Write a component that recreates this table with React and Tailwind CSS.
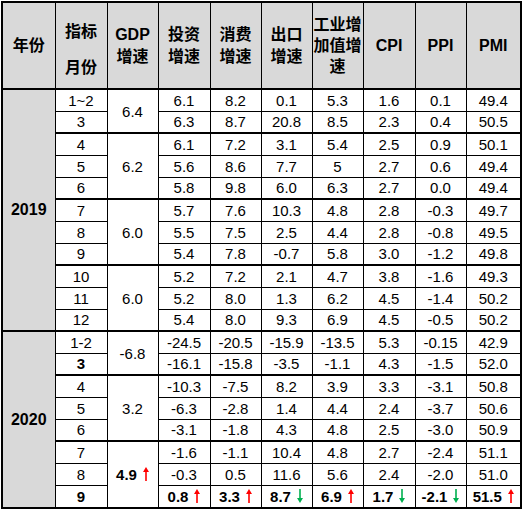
import React from 'react';

// one arrow glyph, drawn so the stroke stays thin like the reference
const Arrow = ({ dir }) => (
  <svg width="6" height="14" viewBox="0 0 6 14" className="inline-block ml-[6px] align-[-1px]">
    {dir === 'up' ? (
      <g fill="#ff0000">
        <rect x="2.2" y="4" width="1.6" height="10" />
        <polygon points="3,0 6,5 0,5" />
      </g>
    ) : (
      <g fill="#00b050">
        <rect x="2.2" y="0" width="1.6" height="10" />
        <polygon points="3,14 6,9 0,9" />
      </g>
    )}
  </svg>
);

const groups = [
  {
    year: '2019',
    quarters: [
      { gdp: '6.4', rows: [
        ['1~2', '6.1', '8.2', '0.1', '5.3', '1.6', '0.1', '49.4'],
        ['3', '6.3', '8.7', '20.8', '8.5', '2.3', '0.4', '50.5'],
      ] },
      { gdp: '6.2', rows: [
        ['4', '6.1', '7.2', '3.1', '5.4', '2.5', '0.9', '50.1'],
        ['5', '5.6', '8.6', '7.7', '5', '2.7', '0.6', '49.4'],
        ['6', '5.8', '9.8', '6.0', '6.3', '2.7', '0.0', '49.4'],
      ] },
      { gdp: '6.0', rows: [
        ['7', '5.7', '7.6', '10.3', '4.8', '2.8', '-0.3', '49.7'],
        ['8', '5.5', '7.5', '2.5', '4.4', '2.8', '-0.8', '49.5'],
        ['9', '5.4', '7.8', '-0.7', '5.8', '3.0', '-1.2', '49.8'],
      ] },
      { gdp: '6.0', rows: [
        ['10', '5.2', '7.2', '2.1', '4.7', '3.8', '-1.6', '49.3'],
        ['11', '5.2', '8.0', '1.3', '6.2', '4.5', '-1.4', '50.2'],
        ['12', '5.4', '8.0', '9.3', '6.9', '4.5', '-0.5', '50.2'],
      ] },
    ],
  },
  {
    year: '2020',
    quarters: [
      { gdp: '-6.8', rows: [
        ['1-2', '-24.5', '-20.5', '-15.9', '-13.5', '5.3', '-0.15', '42.9'],
        ['3', '-16.1', '-15.8', '-3.5', '-1.1', '4.3', '-1.5', '52.0'],
      ], boldMonth: { 1: true } },
      { gdp: '3.2', rows: [
        ['4', '-10.3', '-7.5', '8.2', '3.9', '3.3', '-3.1', '50.8'],
        ['5', '-6.3', '-2.8', '1.4', '4.4', '2.4', '-3.7', '50.6'],
        ['6', '-3.1', '-1.8', '4.3', '4.8', '2.5', '-3.0', '50.9'],
      ] },
      { gdp: '4.9', gdpArrow: 'up', rows: [
        ['7', '-1.6', '-1.1', '10.4', '4.8', '2.7', '-2.4', '51.1'],
        ['8', '-0.3', '0.5', '11.6', '5.6', '2.4', '-2.0', '51.0'],
        ['9', '0.8', '3.3', '8.7', '6.9', '1.7', '-2.1', '51.5'],
      ], lastBold: ['up', 'up', 'down', 'up', 'down', 'down', 'up'] },
    ],
  },
];

const cell = 'border border-black p-0 text-center align-middle';

export default function App() {
  return (
    <div className="bg-white w-[524px] h-[511px] pl-[1px] pt-[1px] font-['Liberation_Sans','Noto_Sans_CJK_SC',sans-serif] text-black">
      <div className="w-[521px] border-2 border-black">
        <table className="w-[517px] table-fixed border-collapse border-hidden text-[15px] leading-none">
          <colgroup>
            <col className="w-[52px]" />
            <col className="w-[52px]" />
            <col className="w-[51px]" />
            <col className="w-[52px]" />
            <col className="w-[51px]" />
            <col className="w-[51px]" />
            <col className="w-[51px]" />
            <col className="w-[52px]" />
            <col className="w-[51px]" />
            <col className="w-[54px]" />
          </colgroup>
          <thead>
            <tr className="h-[85px] bg-[#d9d9d9] font-bold text-[16px]">
              <th className={`${cell} border-b-2`}>年份</th>
              <th className={`${cell} border-b-2`}>
                <div className="flex flex-col items-center justify-between h-[85px] pt-[21px] pb-[12px]">
                  <span>指标</span>
                  <span>月份</span>
                </div>
              </th>
              <th className={`${cell} border-b-2 leading-[22px]`}>GDP<br />增速</th>
              <th className={`${cell} border-b-2 leading-[22px]`}>投资<br />增速</th>
              <th className={`${cell} border-b-2 leading-[22px]`}>消费<br />增速</th>
              <th className={`${cell} border-b-2 leading-[22px]`}>出口<br />增速</th>
              <th className={`${cell} border-b-2 leading-[21px]`}>工业增<br />加值增<br />速</th>
              <th className={`${cell} border-b-2`}>CPI</th>
              <th className={`${cell} border-b-2`}>PPI</th>
              <th className={`${cell} border-b-2`}>PMI</th>
            </tr>
          </thead>
          {groups.map((g) => {
            const total = g.quarters.reduce((n, q) => n + q.rows.length, 0);
            return (
              <tbody key={g.year} className="border-b-2 border-black">
                {g.quarters.map((q, qi) =>
                  q.rows.map((r, ri) => {
                    const lastRow = ri === q.rows.length - 1;
                    const isBold = q.lastBold && lastRow;
                    const edge = lastRow ? 'border-b-2' : '';
                    return (
                      <tr key={r[0]} className="h-[22px]">
                        {qi === 0 && ri === 0 && (
                          <td rowSpan={total} className={`${cell} border-b-2 bg-[#d9d9d9] font-bold text-[16px]`}>
                            {g.year}
                          </td>
                        )}
                        <td className={`${cell} ${edge} ${isBold || (q.boldMonth && q.boldMonth[ri]) ? 'font-bold' : ''}`}>
                          {r[0]}
                        </td>
                        {ri === 0 && (
                          <td rowSpan={q.rows.length} className={`${cell} border-b-2 ${q.gdpArrow ? 'font-bold' : ''}`}>
                            {q.gdp}
                            {q.gdpArrow && <Arrow dir={q.gdpArrow} />}
                          </td>
                        )}
                        {r.slice(1).map((v, vi) => (
                          <td key={vi} className={`${cell} ${edge} ${isBold ? 'font-bold' : ''}`}>
                            {v}
                            {isBold && <Arrow dir={q.lastBold[vi]} />}
                          </td>
                        ))}
                      </tr>
                    );
                  })
                )}
              </tbody>
            );
          })}
        </table>
      </div>
    </div>
  );
}
